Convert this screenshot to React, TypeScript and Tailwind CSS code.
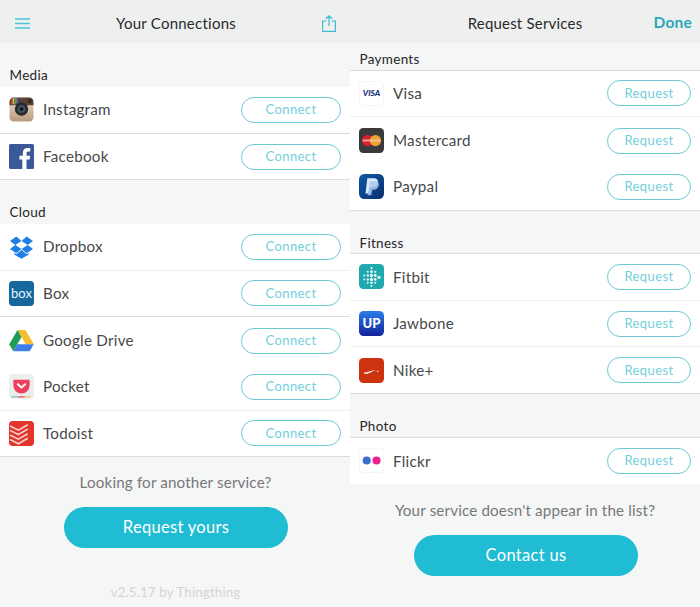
import type { ReactNode } from "react"

const font = { fontFamily: "Lato, sans-serif" }

function IconBox({ children }: { children: ReactNode }) {
  return (
    <svg viewBox="0 0 24 24" className="w-[25px] h-[25px] shrink-0">
      {children}
    </svg>
  )
}

const icons: Record<string, ReactNode> = {
  instagram: (
    <IconBox>
      <defs>
        <linearGradient id="ig" x1="0" y1="0" x2="0" y2="1">
          <stop offset="0" stopColor="#eadfcf" />
          <stop offset="1" stopColor="#b89a7e" />
        </linearGradient>
      </defs>
      <rect x="0.5" y="0.5" width="23" height="23" rx="4" fill="url(#ig)" />
      <path d="M0.5 8V4.500a4 4 0 0 1 4-4h15a4 4 0 0 1 4 4V8H17a6.500 6.500 0 0 0-10 0Z" fill="#5b4034" />
      <rect x="2" y="1" width="1.400" height="6" fill="#d8413a" />
      <rect x="3.600" y="1" width="1.400" height="6" fill="#e8b73e" />
      <rect x="5.200" y="1" width="1.400" height="6" fill="#57a55a" />
      <rect x="6.800" y="1" width="1.400" height="5" fill="#4b82c3" />
      <circle cx="12" cy="11.500" r="6.400" fill="#2a2a2d" />
      <circle cx="12" cy="11.500" r="3.700" fill="#44596f" />
      <circle cx="12" cy="11.500" r="2" fill="#15181d" />
      <rect x="18" y="2.200" width="3.600" height="3.600" rx="0.800" fill="#2f2a28" />
    </IconBox>
  ),
  facebook: (
    <IconBox>
      <rect width="24" height="24" rx="1.500" fill="#3b5998" />
      <path d="M16.800 24v-9.200h3l.5-3.600h-3.500V9c0-1 .3-1.800 1.800-1.800h1.800V4c-.4 0-1.400-.1-2.600-.1-2.700 0-4.500 1.600-4.500 4.600v2.700H10v3.600h2.800V24Z" fill="#fff" />
    </IconBox>
  ),
  dropbox: (
    <IconBox>
      <path
        d="M7 2.500 1 6.600l5 3.900 6-3.700Zm10 0-5 4.300 6 3.700 5-3.900ZM1 14.400l6 4.100 5-4.200-6-3.800Zm22 0-5-3.900-6 3.800 5 4.200ZM12 15.300l-5 4.200-2-1.300v1.500l7 4.100 7-4.100v-1.500l-2 1.300Z"
        fill="#1f7fe6"
      />
    </IconBox>
  ),
  box: (
    <IconBox>
      <rect width="24" height="24" rx="3.500" fill="#14689c" />
      <text x="12" y="16" textAnchor="middle" fontSize="12.500" fontWeight="400" fill="#e6f4fc" style={font}>
        box
      </text>
    </IconBox>
  ),
  drive: (
    <IconBox>
      <path d="M8.200 2h7.600l8 13.500H16Z" fill="#f6c02c" />
      <path d="M8.200 2 0.200 15.600l3.900 6.600 7.900-13.600Z" fill="#1f9d55" />
      <path d="M8 15.500h15.800l-3.900 6.700H4.100Z" fill="#3f7fe8" />
    </IconBox>
  ),
  pocket: (
    <IconBox>
      <rect width="24" height="24" rx="4" fill="#eceded" />
      <rect x="2" y="21.200" width="7" height="1.400" fill="#7fcfc4" />
      <rect x="9" y="21.200" width="6" height="1.400" fill="#ee5f74" />
      <rect x="15" y="21.200" width="6" height="1.400" fill="#f3c66a" />
      <path d="M5 5.500h14a0.800 0.800 0 0 1 .8.8V11a7.800 7.800 0 0 1-15.600 0V6.300A.8.800 0 0 1 5 5.500Z" fill="#ed3f5f" />
      <path d="m8.500 9.800 3.500 3.200 3.500-3.200" fill="none" stroke="#fff" strokeWidth="1.900" strokeLinecap="round" strokeLinejoin="round" />
    </IconBox>
  ),
  todoist: (
    <IconBox>
      <rect width="24" height="24" rx="3.500" fill="#e2352c" />
      <path
        d="m1 9 8 4 9-5.200M1 13.400l8 4 9-5.200M1 17.800l8 4 9-5.200M1 4.800l8 4 9-5.200"
        fill="none"
        stroke="#f8d2cd"
        strokeWidth="1.600"
      />
    </IconBox>
  ),
  visa: (
    <IconBox>
      <rect x="0.250" y="0.250" width="23.500" height="23.500" rx="4" fill="#fff" stroke="#e8e8ec" strokeWidth="0.500" />
      <text x="12" y="14.600" textAnchor="middle" fontSize="8" fontWeight="900" fontStyle="italic" fill="#22307f" style={font}>
        VISA
      </text>
    </IconBox>
  ),
  mastercard: (
    <IconBox>
      <rect width="24" height="24" rx="4" fill="#3a3a3c" />
      <circle cx="8.200" cy="12" r="5.400" fill="#d6202d" />
      <circle cx="15.800" cy="12" r="5.400" fill="#f0a232" />
      <rect x="3.500" y="11" width="17" height="2" fill="#f6c8b4" opacity="0.750" />
    </IconBox>
  ),
  paypal: (
    <IconBox>
      <defs>
        <linearGradient id="pp" x1="0" y1="0" x2="1" y2="1">
          <stop offset="0" stopColor="#0b5aa8" />
          <stop offset="1" stopColor="#0c2e6e" />
        </linearGradient>
      </defs>
      <rect width="24" height="24" rx="5" fill="url(#pp)" />
      <path d="M8 4h6c3 0 4.600 1.700 4.100 4.300-.5 3-2.700 4.400-5.300 4.400h-2l-1 6H6.200Z" fill="#dbe9f8" />
      <path d="M10.500 7h5.200c2.600 0 3.800 1.600 3.300 4-.5 2.600-2.500 4-4.700 4h-1.600l-.9 5.300H8.200Z" fill="#a9c9ee" opacity="0.850" />
    </IconBox>
  ),
  fitbit: (
    <IconBox>
      <rect width="24" height="24" rx="4" fill="#1fa9ae" />
      {[
        [12, 4, 1.1],
        [12, 7.5, 1.4],
        [12, 11, 1.6],
        [12, 14.8, 1.6],
        [12, 18, 1.3],
        [12, 21, 1],
        [8.4, 7.5, 1],
        [8.4, 11, 1.2],
        [8.4, 14.8, 1.2],
        [8.4, 18, 0.9],
        [15.6, 7.5, 1.1],
        [15.6, 11, 1.4],
        [15.6, 14.8, 1.3],
        [15.6, 18, 1],
        [5, 11, 0.9],
        [5, 14.8, 0.9],
        [19.2, 12.8, 1.6],
      ].map(([cx, cy, r]) => (
        <circle key={`${cx}-${cy}`} cx={cx} cy={cy} r={r} fill="#e3f7f6" />
      ))}
    </IconBox>
  ),
  jawbone: (
    <IconBox>
      <defs>
        <linearGradient id="up" x1="0" y1="0" x2="0" y2="1">
          <stop offset="0" stopColor="#2a7de8" />
          <stop offset="1" stopColor="#14229a" />
        </linearGradient>
      </defs>
      <rect width="24" height="24" rx="4.500" fill="url(#up)" />
      <text x="12" y="16.500" textAnchor="middle" fontSize="12.500" fontWeight="900" fill="#fff" style={font}>
        UP
      </text>
    </IconBox>
  ),
  nike: (
    <IconBox>
      <rect width="24" height="24" rx="4" fill="#cc3410" />
      <path d="M5.500 15c-.9-.2-1.100-1-.3-2.300-.3 1.100.2 1.500 1.300 1.300L16 11.300c-3.200 1.800-6 3.300-8 3.700-.9.200-1.800.2-2.500 0Z" fill="#fff" />
      <path d="M17 12.800h2M18 11.800v2" stroke="#f6c9bb" strokeWidth="0.600" />
    </IconBox>
  ),
  flickr: (
    <IconBox>
      <rect x="0.250" y="0.250" width="23.500" height="23.500" rx="4" fill="#fff" stroke="#e8e8ec" strokeWidth="0.500" />
      <circle cx="7.400" cy="12" r="3.900" fill="#3f6dcf" />
      <circle cx="16.800" cy="12" r="3.900" fill="#f01f8b" />
    </IconBox>
  ),
}

type Item = { name: string; icon: string; line: string }

function Row({ item, action, w }: { item: Item; action: string; w: string }) {
  return (
    <div className={`h-[46.7px] bg-white flex items-center px-[9px] ${item.line}`}>
      {icons[item.icon]}
      <span className="ml-[9px] text-[15.2px] text-[#48484a] tracking-[0.25px] flex-1">{item.name}</span>
      <button
        className={`h-[26px] ${w} rounded-full border border-[#6cc9d3] text-[13px] leading-none text-[#74cfda] tracking-[0.4px]`}
      >
        {action}
      </button>
    </div>
  )
}

function Section({
  title,
  items,
  action,
  w,
  labelH,
}: {
  title: string
  items: Item[]
  action: string
  w: string
  labelH: string
}) {
  return (
    <section>
      <div className={`${labelH} pl-[9.5px] flex items-end text-[13.5px] leading-none text-[#262628] tracking-[0.3px]`}>{title}</div>
      {items.map((item) => (
        <Row key={item.name} item={item} action={action} w={w} />
      ))}
    </section>
  )
}

const strong = "border-b border-[#dadcdc]"
const soft = "border-b border-[#eeeeee]"
const none = ""

export default function App() {
  return (
    <div className="w-[700px] h-[607px] overflow-hidden flex bg-[#f5f6f6]" style={font}>
      <div className="w-[350px] flex flex-col">
        <header className="h-[43px] shrink-0 bg-[#eef0f0] flex items-center justify-between pl-[15px] pr-[14px] pt-[3px]">
          <svg viewBox="0 0 15 11" className="w-[15px] h-[11px]" fill="none" stroke="#45c6d8" strokeWidth="1.4">
            <path d="M0 1h15M0 5.500h15M0 10h15" />
          </svg>
          <span className="text-[15px] text-[#2a2a2c] tracking-[0.25px]">Your Connections</span>
          <svg viewBox="0 0 14 17" className="w-[14px] h-[17px]" fill="none" stroke="#3fbdd2" strokeWidth="1.200">
            <path d="M4.500 6H.6v10.400h12.800V6H9.500M7 11V.8M3.800 3.800 7 .8l3.200 3" />
          </svg>
        </header>
        <Section
          title="Media"
          action="Connect"
          w="w-[100px]"
          labelH="h-[44px] pb-[5px]"
          items={[
            { name: "Instagram", icon: "instagram", line: strong },
            { name: "Facebook", icon: "facebook", line: strong },
          ]}
        />
        <Section
          title="Cloud"
          action="Connect"
          w="w-[100px]"
          labelH="h-[43.5px] pb-[4px]"
          items={[
            { name: "Dropbox", icon: "dropbox", line: soft },
            { name: "Box", icon: "box", line: strong },
            { name: "Google Drive", icon: "drive", line: none },
            { name: "Pocket", icon: "pocket", line: soft },
            { name: "Todoist", icon: "todoist", line: strong },
          ]}
        />
        <p className="mt-[15px] ml-[1px] text-center text-[15.2px] leading-5 text-[#77787a] tracking-[0.15px]">Looking for another service?</p>
        <button className="mt-[15px] ml-[64px] w-[224px] h-[41px] rounded-full bg-[#1fbcd4] text-white text-[16.5px] tracking-[0.3px]">
          Request yours
        </button>
        <p className="mt-[36px] ml-[1px] text-center text-[13.2px] leading-4 text-[#d4d5d6] tracking-[0.2px]">v2.5.17 by Thingthing</p>
      </div>
      <div className="w-[350px] flex flex-col">
        <header className="h-[43px] shrink-0 bg-[#eef0f0] relative flex items-center justify-center pt-[3px]">
          <span className="text-[15px] text-[#2a2a2c] tracking-[0.2px]">Request Services</span>
          <span className="absolute right-[8px] text-[15.5px] font-bold text-[#2aa7b8] tracking-[0.2px]">Done</span>
        </header>
        <Section
          title="Payments"
          action="Request"
          w="w-[84px]"
          labelH="h-[27.5px] pb-[3px] border-b border-[#dadcdc]"
          items={[
            { name: "Visa", icon: "visa", line: soft },
            { name: "Mastercard", icon: "mastercard", line: none },
            { name: "Paypal", icon: "paypal", line: strong },
          ]}
        />
        <Section
          title="Fitness"
          action="Request"
          w="w-[84px]"
          labelH="h-[43.5px] pb-[3px] border-b border-[#dadcdc]"
          items={[
            { name: "Fitbit", icon: "fitbit", line: soft },
            { name: "Jawbone", icon: "jawbone", line: soft },
            { name: "Nike+", icon: "nike", line: strong },
          ]}
        />
        <Section
          title="Photo"
          action="Request"
          w="w-[84px]"
          labelH="h-[43.5px] pb-[3px] border-b border-[#dadcdc]"
          items={[{ name: "Flickr", icon: "flickr", line: none }]}
        />
        <p className="mt-[16px] text-center text-[15.2px] leading-5 text-[#77787a] tracking-[0.15px]">Your service doesn't appear in the list?</p>
        <button className="mt-[15px] ml-[64px] w-[224px] h-[41px] rounded-full bg-[#1fbcd4] text-white text-[16.5px] tracking-[0.3px]">
          Contact us
        </button>
      </div>
    </div>
  )
}
